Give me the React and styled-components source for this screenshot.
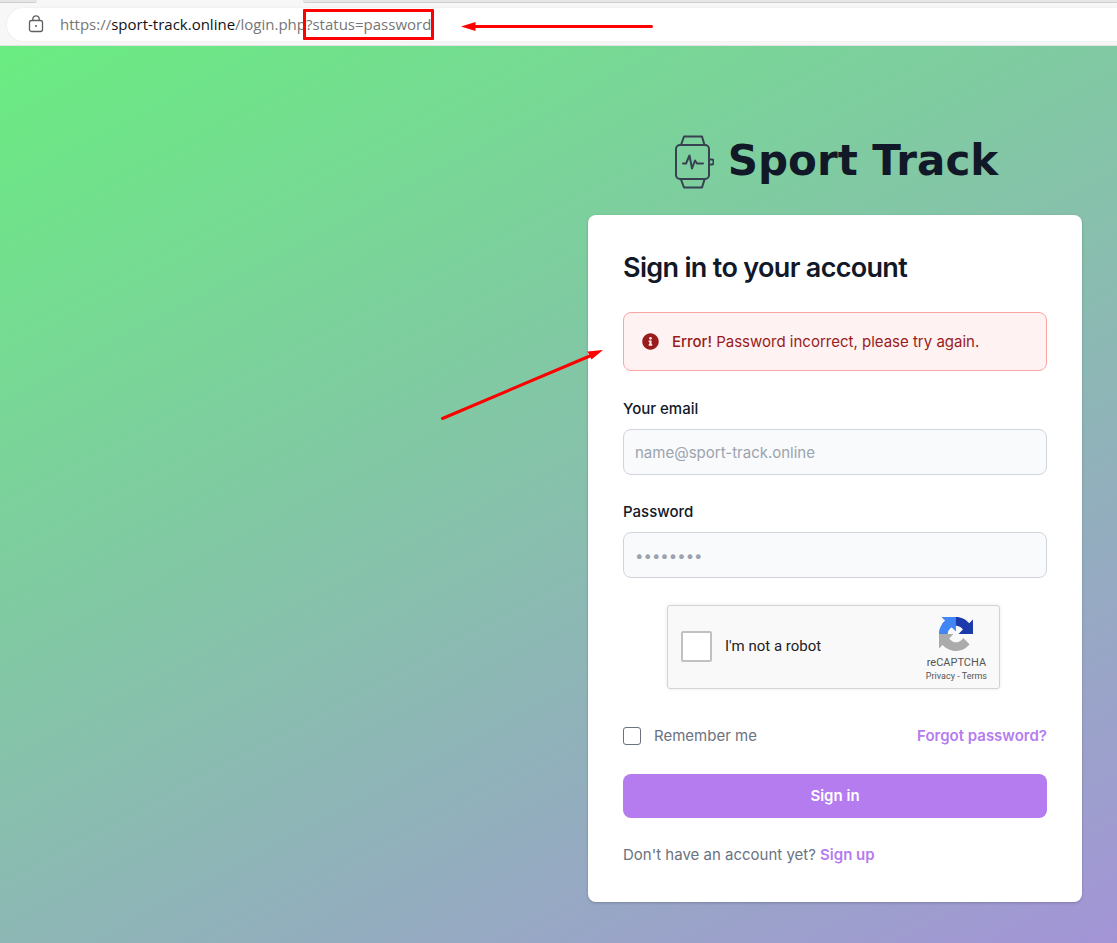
import React from "react";
import styled, { createGlobalStyle } from "styled-components";
import { FaInfoCircle } from "react-icons/fa";

const GlobalStyle = createGlobalStyle`
  *, *::before, *::after { box-sizing: border-box; }
  body {
    margin: 0;
    font-family: Inter, "Liberation Sans", sans-serif;
    font-size: 15px;
    line-height: 22px;
    color: #111827;
  }
`;

const Browser = styled.div`
  position: relative;
  display: flex;
  flex-direction: column;
  min-height: 100vh;
`;

const Chrome = styled.header`
  background: #f7f7f7;
  height: 46px;
  border-bottom: 1px solid #e3e3e3;
`;

const TabStrip = styled.div`
  display: flex;
  justify-content: space-between;
  gap: 266px;
  height: 8px;
`;

const Tab = styled.div`
  flex: ${(p) => (p.$grow ? "1" : "0 0 37px")};
  height: 3px;
  background: #e6e6e6;
  border-bottom: 1px solid #cfcfcf;
  border-radius: ${(p) => (p.$grow ? "0 0 0 4px" : "0 0 4px 0")};
`;

const AddressBar = styled.div`
  display: flex;
  align-items: center;
  gap: 16px;
  height: 33px;
  margin-left: 7px;
  padding: 0 0 2px 21px;
  background: #fff;
  border-radius: 17px 0 0 17px;
  box-shadow: 0 0 3px rgba(0, 0, 0, 0.06);
`;

const Url = styled.div`
  display: flex;
  font-family: "Open Sans", "Noto Sans", sans-serif;
  font-size: 15px;
  color: #767676;
  white-space: nowrap;

  b { font-weight: 400; color: #111; }
`;

const Highlight = styled.span`
  position: relative;

  &::after {
    content: "";
    position: absolute;
    inset: -4px -3px -5px -3px;
    border: 3px solid #fe0000;
    border-radius: 1px;
  }
`;

const Page = styled.main`
  flex: 1;
  display: flex;
  flex-direction: column;
  align-items: flex-end;
  padding: 87px 35px 41px;
  background: linear-gradient(152deg, #6aec81 0%, #af83e8 120%);
`;

const Column = styled.div`
  width: 100%;
  max-width: 494px;
`;

const Brand = styled.a`
  display: flex;
  align-items: center;
  justify-content: center;
  gap: 14px;
  height: 56px;
  margin-bottom: 26px;
  color: #111827;
  font: bold 42px/56px "DejaVu Sans", sans-serif;
  text-decoration: none;
  white-space: nowrap;
`;

const Card = styled.section`
  padding: 35px 35px 36px;
  background: #fff;
  border-radius: 8px;
  box-shadow: 0 1px 3px rgba(0, 0, 0, 0.2);
`;

const Title = styled.h1`
  margin: 0 0 26px;
  font-size: 27px;
  line-height: 36px;
  font-weight: 600;
  letter-spacing: -0.025em;
`;

const Alert = styled.div`
  display: flex;
  align-items: center;
  gap: 13px;
  height: 59px;
  margin-bottom: 27px;
  padding: 0 18px;
  color: #991b1b;
  background: #fef2f2;
  border: 1px solid #fca5a5;
  border-radius: 8px;

  p { margin: 0; }
  strong { font-weight: 500; }
  svg { flex: none; }
`;

const Field = styled.div`
  display: flex;
  flex-direction: column;
  gap: 9px;
  margin-bottom: 26px;

  label { font-weight: 500; }
`;

const TextInput = styled.input`
  width: 100%;
  height: 46px;
  padding: 0 11px;
  font: inherit;
  color: #111827;
  background: #f9fafb;
  border: 1px solid #d1d5db;
  border-radius: 8px;

  &::placeholder { color: #9ca3af; opacity: 1; }
`;

const Captcha = styled.div`
  display: flex;
  align-items: center;
  justify-content: space-between;
  width: 333px;
  max-width: 100%;
  height: 84px;
  margin: 27px 44px 36px;
  padding: 0 12px 2px 13px;
  background: #f9f9f9;
  border: 1px solid #d3d3d3;
  border-radius: 3px;
  box-shadow: 0 0 4px rgba(0, 0, 0, 0.08);
  font-family: Roboto, sans-serif;
`;

const CheckLabel = styled.label`
  display: flex;
  align-items: center;
  gap: 13px;
  color: ${(p) => (p.$dark ? "#222" : "#6b7280")};
`;

const CheckBox = styled.input`
  appearance: none;
  width: ${(p) => p.$size}px;
  height: ${(p) => p.$size}px;
  margin: 0;
  background: #fff;
  border: ${(p) => (p.$heavy ? "2px solid #c1c1c1" : "1px solid #6b7280")};
  border-radius: ${(p) => (p.$heavy ? 2 : 3)}px;
`;

const CaptchaBrand = styled.div`
  display: flex;
  flex-direction: column;
  align-items: center;
  padding-top: 6px;
  color: #555;
  font-size: 11px;
  line-height: 14px;

  svg { margin-bottom: 5px; }
  small { font-size: 9px; line-height: 12px; }
  a { color: inherit; text-decoration: none; }
`;

const Row = styled.div`
  display: flex;
  align-items: center;
  justify-content: space-between;
  margin-bottom: 27px;
`;

const PurpleLink = styled.a`
  color: #b57cf0;
  font-weight: 600;
  text-decoration: none;
`;

const SubmitButton = styled.button`
  display: block;
  width: 100%;
  height: 44px;
  margin-bottom: 26px;
  font: inherit;
  font-weight: 600;
  color: #fff;
  background: #b57cf0;
  border: 0;
  border-radius: 8px;
`;

const SignUp = styled.p`
  margin: 0;
  color: #6b7280;
`;

const Arrows = styled.svg`
  position: absolute;
  top: 0;
  left: 0;
  pointer-events: none;
`;

const LockIcon = () => (
  <svg width="16" height="18" viewBox="0 0 16 18" fill="none" stroke="#5f5f5f" strokeWidth="1.3">
    <rect x="1.5" y="5.5" width="13" height="11" rx="2" />
    <path d="M4.8 5.5V4a3.2 3.2 0 0 1 6.4 0v1.5" />
    <circle cx="8" cy="11" r="1" fill="#5f5f5f" stroke="none" />
  </svg>
);

const WatchIcon = () => (
  <svg width="42" height="56" viewBox="0 0 42 56" fill="none" stroke="#374151" strokeWidth="2" strokeLinejoin="round" strokeLinecap="round">
    <rect x="4" y="12" width="33" height="34" rx="4" />
    <path d="M9 12 12 3.500h18L32.500 12M9 46.500 12 54.500h18L32.500 46.500" />
    <path d="M37 26.500h3a1.500 1.500 0 0 1 1.500 1.500v2a1.500 1.500 0 0 1-1.500 1.500h-3" />
    <path d="M11 30.500h3L17.500 22.500 20 35.500 23 27.500 25 30.500h6" />
  </svg>
);

const CaptchaIcon = () => (
  <svg width="34" height="34" viewBox="0 0 64 64">
    <path fill="#1c3aa9" d="M64 31.955l-.033-1.370V4.687l-7.160 7.160C50.948 4.674 42.033.093 32.050.093c-10.390 0-19.622 4.960-25.458 12.640l11.736 11.860a15.550 15.550 0 0 1 4.754-5.334c2.050-1.600 4.952-2.906 8.968-2.906.485 0 .860.057 1.135.163 4.976.393 9.288 3.140 11.828 7.124l-8.307 8.307L64 31.953" />
    <path fill="#4285f4" d="M31.862.094l-1.370.033H4.594l7.160 7.160C4.580 13.147 0 22.060 0 32.046c0 10.390 4.960 19.622 12.640 25.458L24.500 45.768a15.550 15.550 0 0 1-5.334-4.754c-1.600-2.050-2.906-4.952-2.906-8.968 0-.485.057-.860.163-1.135.393-4.976 3.140-9.288 7.124-11.828l8.307 8.307L31.860.095" />
    <path fill="#ababab" d="M.001 32.045l.033 1.370v25.898l7.160-7.160c5.860 7.173 14.774 11.754 24.760 11.754 10.390 0 19.622-4.960 25.458-12.640l-11.736-11.860a15.550 15.550 0 0 1-4.754 5.334c-2.050 1.600-4.952 2.906-8.968 2.906-.485 0-.860-.057-1.135-.163-4.976-.393-9.288-3.140-11.828-7.124l8.307-8.307L0 32.045" />
  </svg>
);

export default function App() {
  return (
    <Browser>
      <GlobalStyle />
      <Chrome>
        <TabStrip>
          <Tab />
          <Tab $grow />
        </TabStrip>
        <AddressBar>
          <LockIcon />
          <Url>
            <span>https://</span>
            <b>sport-track.online</b>
            <span>/login.php</span>
            <Highlight>?status=password</Highlight>
          </Url>
        </AddressBar>
      </Chrome>
      <Page>
        <Column>
          <Brand href="#">
            <WatchIcon />
            Sport Track
          </Brand>
          <Card>
            <Title>Sign in to your account</Title>
            <Alert role="alert">
              <FaInfoCircle size={17} />
              <p><strong>Error!</strong> Password incorrect, please try again.</p>
            </Alert>
            <form>
              <Field>
                <label htmlFor="email">Your email</label>
                <TextInput id="email" type="email" placeholder="name@sport-track.online" />
              </Field>
              <Field>
                <label htmlFor="password">Password</label>
                <TextInput id="password" type="password" placeholder="••••••••" />
              </Field>
              <Captcha>
                <CheckLabel $dark>
                  <CheckBox type="checkbox" $size={31} $heavy />
                  I'm not a robot
                </CheckLabel>
                <CaptchaBrand>
                  <CaptchaIcon />
                  <span>reCAPTCHA</span>
                  <small><a href="#">Privacy</a> - <a href="#">Terms</a></small>
                </CaptchaBrand>
              </Captcha>
              <Row>
                <CheckLabel>
                  <CheckBox type="checkbox" $size={18} />
                  Remember me
                </CheckLabel>
                <PurpleLink href="#">Forgot password?</PurpleLink>
              </Row>
              <SubmitButton type="button">Sign in</SubmitButton>
              <SignUp>
                Don't have an account yet? <PurpleLink href="#">Sign up</PurpleLink>
              </SignUp>
            </form>
          </Card>
        </Column>
      </Page>
      <Arrows width="660" height="430" viewBox="0 0 660 430" stroke="#fe0000" strokeWidth="3" strokeLinecap="round" fill="#fe0000">
        <path d="M472 26.500H651.500M442.500 418.500 591 355.500" />
        <path stroke="none" d="M461 26.500 475.500 22v9zM603 350 591.500 359.500 587.500 351.500z" />
      </Arrows>
    </Browser>
  );
}
